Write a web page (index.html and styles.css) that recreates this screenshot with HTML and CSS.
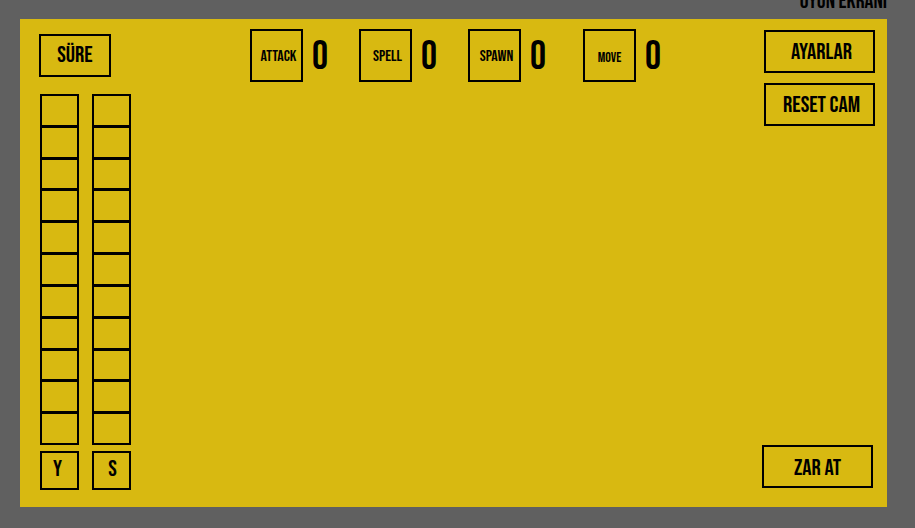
FILE: index.html
```html
<!DOCTYPE html>
<html lang="tr">
<head>
<meta charset="utf-8">
<meta name="viewport" content="width=device-width, initial-scale=1">
<title>Oyun Ekranı</title>
<link rel="stylesheet" href="styles.css">
</head>
<body>
<header class="caption"><h1>OYUN EKRANI</h1></header>
<main class="panel">
  <section class="left">
    <div class="timer">SÜRE</div>
    <div class="meters">
      <div class="meter">
        <div class="cells"><i></i><i></i><i></i><i></i><i></i><i></i><i></i><i></i><i></i><i></i><i></i></div>
        <div class="key key-y">Y</div>
      </div>
      <div class="meter">
        <div class="cells"><i></i><i></i><i></i><i></i><i></i><i></i><i></i><i></i><i></i><i></i><i></i></div>
        <div class="key key-s">S</div>
      </div>
    </div>
  </section>
  <section class="stats">
    <div class="stat"><button type="button">ATTACK</button><output>0</output></div>
    <div class="stat"><button type="button">SPELL</button><output>0</output></div>
    <div class="stat"><button type="button">SPAWN</button><output>0</output></div>
    <div class="stat stat-move"><button type="button">MOVE</button><output>0</output></div>
  </section>
  <nav class="actions">
    <button type="button">AYARLAR</button>
    <button type="button">RESET CAM</button>
    <button type="button" class="roll">ZAR AT</button>
  </nav>
</main>
</body>
</html>
```
FILE: styles.css
```css
* {
  box-sizing: border-box;
}

body {
  display: flex;
  flex-direction: column;
  min-height: 100vh;
  margin: 0;
  padding: 0 28px 21px 20px;
  background: #606060;
  color: #000;
  font-family: "Bebas Neue", "Liberation Sans Narrow", "Liberation Sans", sans-serif;
  font-weight: 400;
}

.caption {
  display: flex;
  flex-direction: column;
  align-items: flex-end;
  justify-content: flex-end;
  height: 19px;
  padding-bottom: 6px;
  overflow: hidden;
}

.caption h1 {
  flex: none;
  margin: 0;
  font-size: 22px;
  font-weight: 400;
  line-height: 22px;
}

.panel {
  display: grid;
  flex: 1;
  grid-template-columns: 1fr auto 1fr;
  padding: 10px 12px 17px 19px;
  background: #d8b911;
}

button {
  padding: 0;
  border: 2px solid #000;
  background: none;
  color: inherit;
  font: inherit;
}

.left {
  display: flex;
  flex-direction: column;
  align-items: flex-start;
  gap: 17px;
  padding-top: 5px;
}

.timer {
  width: 72px;
  border: 2px solid #000;
  font-size: 23px;
  line-height: 39px;
  text-align: center;
}

.meters {
  display: flex;
  flex: 1;
  gap: 13px;
  padding-left: 1px;
}

.meter {
  display: flex;
  flex-direction: column;
  gap: 6px;
  width: 39px;
}

.cells {
  display: flex;
  flex: 1;
  flex-direction: column;
}

.cells i {
  flex: 1;
  border: 2px solid #000;
}

.cells i + i {
  margin-top: -1px;
}

.key {
  height: 39px;
  border: 2px solid #000;
  font-size: 23px;
  line-height: 33px;
  text-align: center;
}

.key-y {
  padding-right: 4px;
}

.key-s {
  padding-left: 2px;
}

.stats {
  display: flex;
  gap: 31px;
  padding-right: 3px;
}

.stat {
  display: flex;
  gap: 9px;
  height: 53px;
}

.stat-move {
  margin-left: 6px;
}

.stat button {
  width: 53px;
  padding: 2px 0 0 4px;
  font-size: 16px;
}

.stat-move button {
  padding: 4px 0 0;
  font-size: 14px;
}

.stat output {
  width: 16px;
  font-size: 40px;
  line-height: 56px;
  text-align: center;
}

.actions {
  display: flex;
  flex-direction: column;
  align-items: flex-end;
  gap: 10px;
}

.actions button {
  width: 111px;
  height: 43px;
  padding-left: 4px;
  font-size: 23px;
}

.actions button:first-child {
  margin-top: 1px;
}

.actions .roll {
  margin: auto 2px 2px 0;
  padding: 2px 0 0;
}
```
